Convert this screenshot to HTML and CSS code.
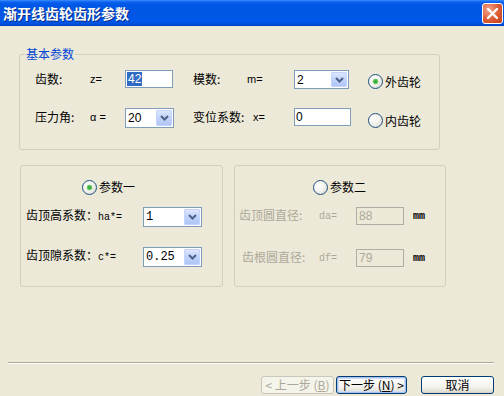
FILE: index.html
```html
<!DOCTYPE html>
<html lang="zh">
<head>
<meta charset="utf-8">
<title>渐开线齿轮齿形参数</title>
<link rel="stylesheet" href="styles.css">
</head>
<body>
<div class="window">
  <div class="titlebar">
    <span class="title">渐开线齿轮齿形参数</span>
    <span class="close"><svg width="13" height="13" viewBox="0 0 13 13"><path d="M2 2 L11 11 M11 2 L2 11" stroke="#fff" stroke-width="2.4" stroke-linecap="round"/></svg></span>
  </div>
  <div class="content">
    <fieldset class="group basic">
      <legend>基本参数</legend>
      <div class="basic-grid">
        <span class="lbl">齿数:</span>
        <span class="eq">z=</span>
        <span class="field w48"><span class="sel">42</span></span>
        <span class="lbl">模数:</span>
        <span class="eq">m=</span>
        <span class="combo w55 h19"><span class="val">2</span><span class="drop"><svg width="9" height="6" viewBox="0 0 9 6"><path d="M1 1 L4.5 4.5 L8 1" fill="none" stroke="#4D6185" stroke-width="2"/></svg></span></span>
        <span class="radio checked">外齿轮</span>

        <span class="lbl">压力角:</span>
        <span class="eq">α =</span>
        <span class="combo w49 h20"><span class="val">20</span><span class="drop"><svg width="9" height="6" viewBox="0 0 9 6"><path d="M1 1 L4.5 4.5 L8 1" fill="none" stroke="#4D6185" stroke-width="2"/></svg></span></span>
        <span class="lbl">变位系数:</span>
        <span class="eq eq-x">x=</span>
        <span class="field w57">0</span>
        <span class="radio">内齿轮</span>
      </div>
    </fieldset>

    <div class="groups">
      <section class="group box p1">
        <div class="radio-row r1"><span class="radio checked">参数一</span></div>
        <div class="param-grid g1">
          <span class="lbl">齿顶高系数：<span class="mono">ha*=</span></span>
          <span class="combo w59 h20"><span class="val mono12">1</span><span class="drop"><svg width="9" height="6" viewBox="0 0 9 6"><path d="M1 1 L4.5 4.5 L8 1" fill="none" stroke="#4D6185" stroke-width="2"/></svg></span></span>
          <span class="lbl">齿顶隙系数：<span class="mono">c*=</span></span>
          <span class="combo w59 h20"><span class="val mono12">0.25</span><span class="drop"><svg width="9" height="6" viewBox="0 0 9 6"><path d="M1 1 L4.5 4.5 L8 1" fill="none" stroke="#4D6185" stroke-width="2"/></svg></span></span>
        </div>
      </section>
      <section class="group box p2">
        <div class="radio-row r2"><span class="radio">参数二</span></div>
        <div class="param-grid g2">
          <span class="lbl dis">齿顶圆直径:</span>
          <span class="mono dis">da=</span>
          <span class="field w48 disabled">88</span>
          <span class="unit">mm</span>
          <span class="lbl dis shift">齿根圆直径:</span>
          <span class="mono dis">df=</span>
          <span class="field w48 disabled">79</span>
          <span class="unit">mm</span>
        </div>
      </section>
    </div>

    <div class="separator"></div>

    <div class="buttons">
      <span class="btn prev disabled">&lt; 上一步 (<u>B</u>)</span>
      <span class="btn next">下一步 (<u>N</u>) &gt;</span>
      <span class="btn cancel">取消</span>
    </div>
  </div>
</div>
</body>
</html>
```

FILE: styles.css
```css
* { box-sizing: border-box; }
html, body { margin: 0; padding: 0; }
body {
  width: 504px;
  height: 396px;
  overflow: hidden;
  background: #ECE9D8;
  font-family: "Noto Sans CJK SC", "Noto Sans", sans-serif;
  font-size: 12px;
  color: #000;
}
.window { display: flex; flex-direction: column; height: 396px; }

.titlebar {
  height: 26px;
  flex: none;
  display: flex;
  align-items: center;
  justify-content: space-between;
  padding: 0 1px 0 3px;
  background: linear-gradient(#3D8DFF 0, #0C62EE 2px, #0057E6 5px, #0055E3 55%, #0059EC 80%, #0050DC 92%, #0040C0 100%);
}
.title {
  color: #fff;
  font-weight: bold;
  font-size: 14px;
  line-height: 16px;
  text-shadow: 1px 1px 0 #0A2A80;
}
.close {
  width: 21px;
  height: 21px;
  border: 1px solid #fff;
  border-radius: 3px;
  background: radial-gradient(circle at 30% 30%, #F0A48A, #DC5A34 55%, #C23E18);
  display: flex;
  align-items: center;
  justify-content: center;
}

.content {
  flex: 1;
  display: flex;
  flex-direction: column;
  padding: 21px 10px 0 8px;
}

.group { border: 1px solid #D0D0BF; border-radius: 3px; }

fieldset.basic {
  margin: 0 0 0 11px;
  padding: 0;
  width: 421px;
  height: 103px;
  min-width: 0;
}
fieldset.basic legend {
  margin-left: 5px;
  padding: 0 1px;
  color: #0046D5;
  font-size: 12px;
  line-height: 14px;
}
.basic-grid {
  display: grid;
  grid-template-columns: 55px 35px 68px 54px 47px 74px auto;
  grid-template-rows: 19px 20px;
  row-gap: 19px;
  align-items: center;
  padding: 9px 0 0 15px;
}
.lbl { line-height: 14px; white-space: nowrap; margin-top: -2px; }
.eq { font-family: "Liberation Sans", sans-serif; font-size: 11px; margin-top: -2px; }
.eq-x { margin-left: 6px; }
.mono { font-family: "Liberation Mono", monospace; font-size: 10px; }
.mono12 { font-family: "Liberation Mono", monospace; font-size: 12px; }

.field {
  align-self: start;
  height: 18px;
  border: 1px solid #7F9DB9;
  background: #fff;
  font-family: "Liberation Sans", sans-serif;
  font-size: 12px;
  line-height: 16px;
  padding-left: 1px;
}
.w48 { width: 48px; }
.w57 { width: 57px; }
.w55 { width: 55px; }
.w49 { width: 49px; }
.w59 { width: 59px; }
.h19 { height: 19px; }
.h20 { height: 20px; }
.sel { background: #316AC5; color: #fff; display: inline-block; padding: 0 1px; line-height: 14px; }

.combo {
  align-self: start;
  display: flex;
  align-items: stretch;
  border: 1px solid #7F9DB9;
  background: #fff;
  font-family: "Liberation Sans", sans-serif;
  font-size: 12px;
}
.combo .val { flex: 1; padding-left: 2px; display: flex; align-items: center; }
.combo .drop {
  width: 16px;
  margin: 1px;
  border: 1px solid #C3D3FD;
  border-radius: 1px;
  background: linear-gradient(#DCE6FD, #C1D3FB 50%, #B0C6F5);
  display: flex;
  align-items: center;
  justify-content: center;
}

.radio {
  display: inline-flex;
  align-items: center;
  gap: 2px;
  line-height: 14px;
  white-space: nowrap;
}
.radio::before {
  content: "";
  width: 13px;
  height: 13px;
  flex: none;
  border-radius: 50%;
  border: 1px solid #1C5180;
  background: radial-gradient(circle at 35% 35%, #FFFFFF 0, #F4F3EE 45%, #D4D2C6 100%);
}
.radio.checked::before {
  background:
    radial-gradient(circle, #2CA82C 0, #49B949 1.6px, #84D07E 2.6px, rgba(255,255,255,0) 3.2px),
    radial-gradient(circle at 35% 35%, #FFFFFF 0, #F4F3EE 45%, #D4D2C6 100%);
}
.basic-grid .radio { align-self: end; }

.groups {
  display: flex;
  gap: 11px;
  margin: 15px 0 0 12px;
}
.box { height: 122px; }
.p1 { width: 203px; }
.p2 { width: 212px; }
.radio-row { padding-top: 14px; height: 28px; display: flex; align-items: center; }
.r1 { padding-left: 61px; }
.r2 { padding-left: 78px; }

.param-grid {
  display: grid;
  align-items: center;
  margin-top: 13px;
}
.g1 {
  grid-template-columns: 117px 59px;
  grid-template-rows: 20px 20px;
  row-gap: 20px;
  padding-left: 5px;
}
.g2 {
  grid-template-columns: 80px 37px 57px auto;
  grid-template-rows: 18px 18px;
  row-gap: 24px;
  padding-left: 4px;
}
.dis { color: #ACA899; }
.shift { padding-left: 3px; }
.field.disabled {
  background: #ECE9D8;
  border-color: #B0AEA4;
  color: #ACA899;
  padding-left: 2px;
}
.unit { font-family: "Liberation Mono", monospace; font-size: 10px; font-weight: bold; color: #000; }

.separator {
  margin-top: 75px;
  width: 486px;
  height: 2px;
  border-top: 1px solid #ACA899;
  border-bottom: 1px solid #FFFFFF;
}

.buttons {
  display: flex;
  justify-content: flex-end;
  margin-top: 12px;
}
.btn {
  height: 18px;
  border: 1px solid #003C74;
  border-radius: 3px;
  background: linear-gradient(#FFFFFF, #F4F3EE 60%, #E3E0D6 90%, #D6D0C5);
  display: flex;
  align-items: center;
  justify-content: center;
  font-size: 12px;
  line-height: 14px;
  white-space: nowrap;
}
.btn u { text-decoration: underline; }
.prev { width: 73px; }
.next { width: 71px; margin-left: 2px; box-shadow: inset 0 0 0 1px #A6C3F2, inset 0 0 0 2px #CEDCF6; }
.cancel { width: 73px; margin-left: 14px; }
.btn.disabled {
  border-color: #C9C7BA;
  background: #F5F4EA;
  color: #ACA899;
}
```
